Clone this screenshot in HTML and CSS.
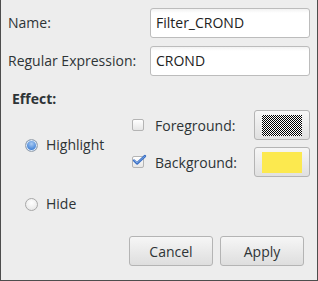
FILE: index.html
```html
<!DOCTYPE html>
<html lang="en">
<head>
    <meta charset="UTF-8">
    <title>Filter</title>
    <link rel="stylesheet" href="styles.css">
</head>
<body>
    <div class="dialog">
        <div class="fields">
            <label class="field-label">Name:</label>
            <div class="entry">Filter_CROND</div>
            <label class="field-label">Regular Expression:</label>
            <div class="entry">CROND</div>
        </div>

        <div class="effect-title">Effect:</div>

        <div class="effect">
            <div class="radio-col">
                <div class="radio-row"><span class="radio checked"></span>Highlight</div>
            </div>
            <div class="colors">
                <div class="color-row">
                    <span class="check"></span>
                    <span class="color-label">Foreground:</span>
                    <button class="color-btn"><span class="swatch checker"></span></button>
                </div>
                <div class="color-row">
                    <span class="check checked">
                        <svg width="15" height="12" viewBox="0 0 15 12"><path d="M2 6.5 L5 9.5 L13 2" fill="none" stroke="#3a6fc4" stroke-width="2.4" stroke-linecap="round" stroke-linejoin="round"/><path d="M2.5 6.5 L5 9 L12.5 2.5" fill="none" stroke="#86b0ea" stroke-width="0.8" stroke-linecap="round"/></svg>
                    </span>
                    <span class="color-label">Background:</span>
                    <button class="color-btn"><span class="swatch yellow"></span></button>
                </div>
            </div>
        </div>

        <div class="radio-row hide-row"><span class="radio"></span>Hide</div>

        <div class="actions">
            <button class="btn">Cancel</button>
            <button class="btn">Apply</button>
        </div>
    </div>
</body>
</html>
```
FILE: styles.css
```css
body {
    margin: 0;
    font-family: "Open Sans", "DejaVu Sans", sans-serif;
    font-size: 14px;
    color: #2e3436;
}

.dialog {
    width: 318px;
    height: 281px;
    box-sizing: border-box;
    background: #ededed;
    border: 1px solid #4d4d4d;
    border-top: none;
    padding: 8px 7px 14px 7px;
    display: flex;
    flex-direction: column;
}

.fields {
    display: grid;
    grid-template-columns: 1fr 160px;
    row-gap: 8px;
    align-items: center;
}

.field-label {
    line-height: 16px;
}

.entry {
    height: 30px;
    box-sizing: border-box;
    border: 1px solid #bcbcbc;
    border-radius: 3px;
    background: linear-gradient(#f2f2f2, #ffffff 4px);
    padding-left: 5px;
    line-height: 28px;
    color: #222;
}

.effect-title {
    font-weight: bold;
    margin-top: 15px;
    padding-left: 4px;
    line-height: 16px;
}

.effect {
    display: flex;
    align-items: center;
    margin-top: 3px;
}

.radio-col {
    width: 124px;
    padding-left: 17px;
    padding-top: 3px;
    box-sizing: border-box;
}

.radio-row {
    display: flex;
    align-items: center;
    line-height: 16px;
}

.radio {
    width: 13px;
    height: 13px;
    box-sizing: border-box;
    border-radius: 50%;
    border: 1px solid #a8a8a8;
    background: radial-gradient(circle at 50% 35%, #ffffff, #e2e2e2);
    margin-right: 8px;
}

.radio.checked {
    border-color: #9aa3ad;
    background: radial-gradient(circle at 50% 35%, #a9cbf3, #4a87d8 60%, #2f6bc0);
    box-shadow: inset 0 0 0 1px #dde8f5;
}

.hide-row {
    margin-top: 19px;
    padding-left: 17px;
}

.colors {
    flex: 1;
    display: flex;
    flex-direction: column;
    gap: 7px;
}

.color-row {
    display: flex;
    align-items: center;
}

.check {
    position: relative;
    width: 12px;
    height: 12px;
    box-sizing: border-box;
    border: 1px solid #b4b4b4;
    border-radius: 2px;
    background: linear-gradient(#ffffff, #e6e6e6);
    margin-right: 11px;
}

.check svg {
    position: absolute;
    left: -1px;
    top: -3px;
}

.color-label {
    flex: 1;
}

.color-btn {
    width: 56px;
    height: 30px;
    padding: 0;
    border: 1px solid #b4b4b4;
    border-radius: 3px;
    background: linear-gradient(#f6f6f6, #e0e0e0);
    display: flex;
    align-items: center;
    justify-content: center;
}

.swatch {
    width: 40px;
    height: 21px;
}

.checker {
    background: repeating-conic-gradient(#000 0 25%, #fff 0 50%) 0 0 / 2px 2px;
}

.yellow {
    background: #fce94f;
}

.actions {
    margin-top: auto;
    display: flex;
    justify-content: flex-end;
    gap: 7px;
    padding-right: 6px;
}

.btn {
    width: 84px;
    height: 30px;
    border: 1px solid #b4b4b4;
    border-radius: 3px;
    background: linear-gradient(#f6f6f6, #dedede);
    font-family: inherit;
    font-size: 14px;
    color: #2e3436;
}
```
